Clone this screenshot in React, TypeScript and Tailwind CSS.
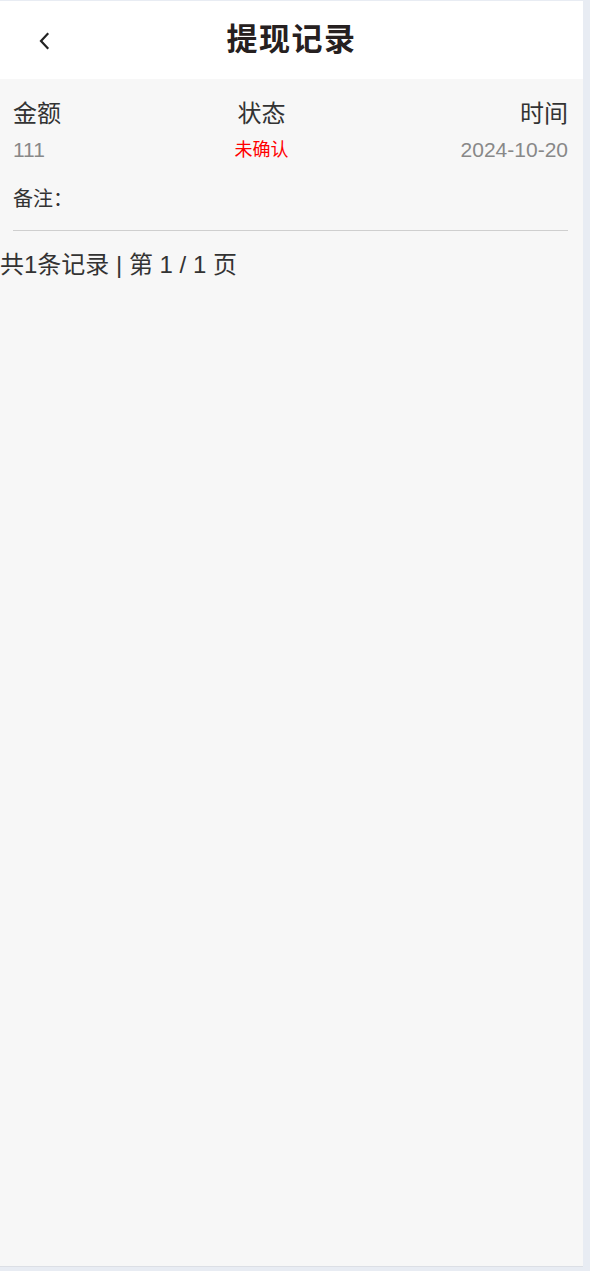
import React from "react";

const font = { fontFamily: '"Liberation Sans", "Noto Sans CJK SC", sans-serif' };

function BackIcon() {
  return (
    <svg width="12" height="18" viewBox="0 0 12 18" fill="none">
      <path d="M9.5 2 L3 9 L9.5 16" stroke="#222" strokeWidth="2.2" strokeLinecap="square" />
    </svg>
  );
}

export default function App() {
  const records = [{ amount: "111", status: "未确认", time: "2024-10-20", note: "" }];
  return (
    <div className="min-h-[1271px] w-[590px] bg-[#e8ecf3] pt-px" style={font}>
      <div className="flex h-[1266px] w-[583px] flex-col bg-[#f7f7f7] border-b border-[#dcdfe5]">
        <header className="relative flex h-[78px] items-center justify-center bg-white">
          <button className="absolute left-[38px] top-[31px] flex items-center">
            <BackIcon />
          </button>
          <h1 className="text-[31px] font-bold tracking-[1.5px] text-[#262020]">提现记录</h1>
        </header>

        <div className="px-[13px] pr-[15px]">
          {records.map((r, i) => (
            <div key={i} className="border-b border-[#cfcfcf] pb-[19px]">
              <div className="grid grid-cols-[200px_97px_1fr] items-end pt-[20px] text-[24px] leading-[30px] text-[#333]">
                <span>金额</span>
                <span className="text-center">状态</span>
                <span className="text-right">时间</span>
              </div>
              <div className="grid grid-cols-[200px_97px_1fr] items-center pt-[6px] leading-[30px]">
                <span className="text-[21px] text-[#888]">{r.amount}</span>
                <span className="text-center text-[18px] text-[#ff0000]">{r.status}</span>
                <span className="text-right text-[21px] text-[#888]">{r.time}</span>
              </div>
              <div className="pt-[22px] text-[20px] leading-[24px] text-[#333]">备注：{r.note}</div>
            </div>
          ))}
        </div>

        <div className="pt-[19px] text-[24px] leading-[30px] text-[#333]">
          共1条记录 | 第 1 / 1 页
        </div>
      </div>
    </div>
  );
}
